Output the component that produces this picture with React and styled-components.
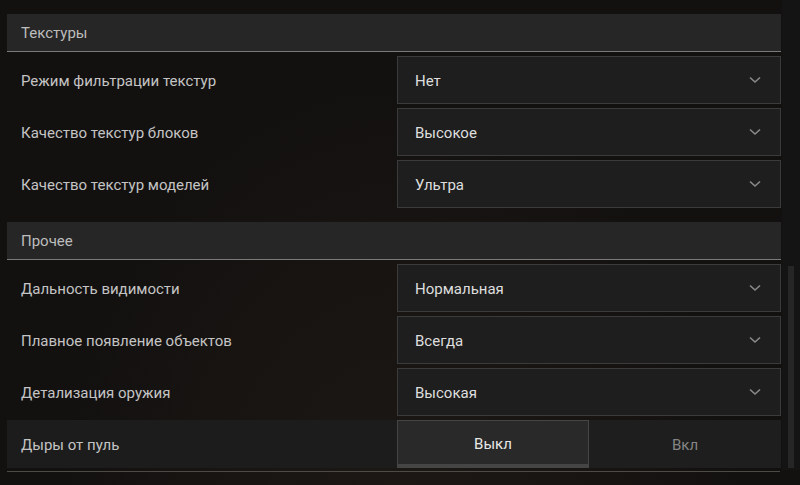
import React from 'react';
import styled, { createGlobalStyle } from 'styled-components';

const GlobalStyle = createGlobalStyle`
  html, body {
    margin: 0;
    padding: 0;
    background: #131110;
  }
  body {
    font-family: Roboto, "Noto Sans", "Liberation Sans", sans-serif;
  }
`;

const sections = [
    {
        title: 'Текстуры',
        rows: [
            { label: 'Режим фильтрации текстур', value: 'Нет' },
            { label: 'Качество текстур блоков', value: 'Высокое' },
            { label: 'Качество текстур моделей', value: 'Ультра' },
        ],
    },
    {
        title: 'Прочее',
        rows: [
            { label: 'Дальность видимости', value: 'Нормальная' },
            { label: 'Плавное появление объектов', value: 'Всегда' },
            { label: 'Детализация оружия', value: 'Высокая' },
            { label: 'Дыры от пуль', toggle: ['Выкл', 'Вкл'], active: 0 },
        ],
    },
];

const Chevron = () => (
    <svg width="12" height="8" viewBox="0 0 12 8">
        <path d="M1 1.5 L6 6 L11 1.5" fill="none" stroke="#8a8a8a" strokeWidth="1.6" />
    </svg>
);

const App = () => {
    return (
        <Page>
            <GlobalStyle />
            <Content>
                {sections.map(section => (
                    <Section key={section.title}>
                        <Header>{section.title}</Header>
                        {section.rows.map(row => (
                            row.toggle ? (
                                <ToggleRow key={row.label}>
                                    <Label>{row.label}</Label>
                                    <Toggle>
                                        {row.toggle.map((opt, i) => (
                                            <ToggleOption key={opt} active={i === row.active}>{opt}</ToggleOption>
                                        ))}
                                    </Toggle>
                                </ToggleRow>
                            ) : (
                                <Row key={row.label}>
                                    <Label>{row.label}</Label>
                                    <Select>
                                        <Value>{row.value}</Value>
                                        <Chevron />
                                    </Select>
                                </Row>
                            )
                        ))}
                    </Section>
                ))}
            </Content>
            <Track>
                <Thumb />
            </Track>
        </Page>
    );
};

export default App;

const Page = styled.div`
display: flex;
width: 800px;
height: 485px;
overflow: hidden;
background: radial-gradient(ellipse at 50% 110%, #1d1814 0%, #131110 60%);
`

const Content = styled.div`
width: 774px;
padding: 14px 0 0 7px;
display: flex;
flex-direction: column;
gap: 14px;
`

const Section = styled.div`
display: flex;
flex-direction: column;
`

const Header = styled.div`
box-sizing: border-box;
height: 38px;
background: #262626;
border-bottom: 1px solid #7a7a7a;
display: flex;
align-items: center;
padding: 1px 0 0 14px;
font-size: 15px;
color: #bdbdbd;
`

const Row = styled.div`
display: grid;
grid-template-columns: 390px 384px;
height: 48px;
margin-top: 4px;
`

const ToggleRow = styled(Row)`
background: #1c1c1c;
position: relative;
margin-bottom: 4px;
&::after {
    content: '';
    position: absolute;
    left: 0;
    right: 1px;
    bottom: -4px;
    height: 1px;
    background: #4e4a46;
}
`

const Label = styled.div`
display: flex;
align-items: center;
padding: 2px 0 0 14px;
font-size: 15px;
color: #c4c4c4;
`

const Select = styled.div`
box-sizing: border-box;
width: 384px;
height: 48px;
background: #1e1e1e;
border: 1px solid #3b3b3b;
display: flex;
align-items: center;
justify-content: space-between;
padding: 0 19px 0 17px;
font-size: 15px;
color: #dedede;
`

const Value = styled.span`
padding-top: 2px;
`

const Toggle = styled.div`
display: grid;
grid-template-columns: 192px 192px;
`

const ToggleOption = styled.div`
box-sizing: border-box;
display: flex;
align-items: center;
justify-content: center;
font-size: 15px;
color: ${p => p.active ? '#e8e8e8' : '#858585'};
background: ${p => p.active ? '#292929' : '#1e1e1e'};
border: ${p => p.active ? '1px solid #454545' : 'none'};
border-bottom: ${p => p.active ? '4px solid #454545' : 'none'};
padding-top: ${p => p.active ? '3px' : '2px'};
`

const Track = styled.div`
width: 18px;
height: 470px;
margin-left: 1px;
background: #151414;
display: flex;
justify-content: center;
`

const Thumb = styled.div`
width: 6px;
height: 202px;
margin-top: 266px;
background: #262626;
`
